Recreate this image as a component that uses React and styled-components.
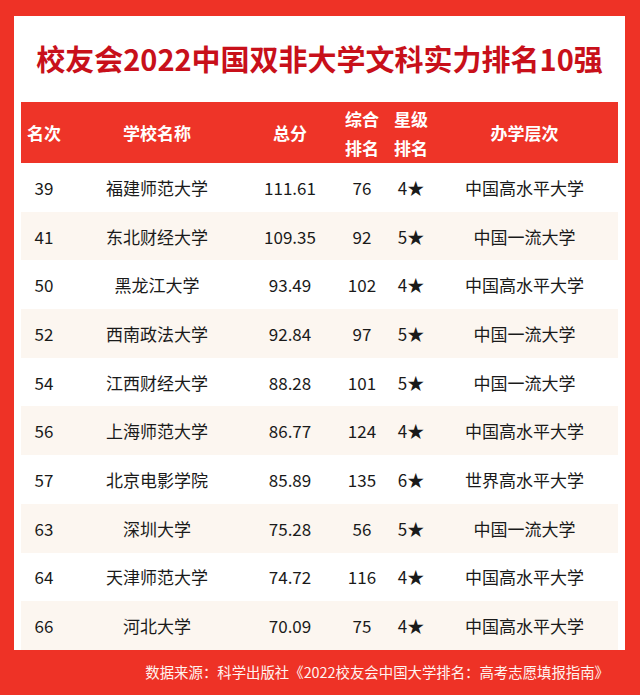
import React from 'react';
import styled, { createGlobalStyle } from 'styled-components';

const GlobalStyle = createGlobalStyle`
  body {
    margin: 0;
    background: #ee3226;
    font-family: "Noto Sans CJK SC", "Noto Sans", sans-serif;
  }
`;

const Frame = styled.div`
  width: 640px;
  height: 695px;
  box-sizing: border-box;
  background: #ee3226;
  padding: 16px 15px 0 14px;
  display: flex;
  flex-direction: column;
`;

const Panel = styled.div`
  background: #ffffff;
  height: 634px;
  box-sizing: border-box;
  padding: 0 7px;
  display: flex;
  flex-direction: column;
`;

const Title = styled.h1`
  margin: 0;
  height: 86px;
  display: flex;
  align-items: center;
  justify-content: center;
  padding-bottom: 2px;
  box-sizing: border-box;
  color: #c8101a;
  font-size: 29px;
  font-weight: 700;
  letter-spacing: 0;
`;

const Grid = styled.div`
  display: grid;
  grid-template-columns: 46px 180px 86px 58px 40px 1fr;
  align-items: center;
  height: ${(p) => p.$h};
  background: ${(p) => p.$bg};
`;

const HeadCell = styled.div`
  color: #ffffff;
  font-size: 17px;
  font-weight: 700;
  line-height: 29px;
  text-align: center;
  white-space: nowrap;
`;

const Cell = styled.div`
  color: #1a1a1a;
  font-size: 17px;
  text-align: center;
  white-space: nowrap;
`;

const Footer = styled.div`
  flex: 1;
  display: flex;
  align-items: center;
  justify-content: flex-end;
  padding-right: 16px;
  padding-bottom: 2px;
  color: #fff3f0;
  font-size: 14.4px;
`;

const rows = [
  ['39', '福建师范大学', '111.61', '76', '4★', '中国高水平大学'],
  ['41', '东北财经大学', '109.35', '92', '5★', '中国一流大学'],
  ['50', '黑龙江大学', '93.49', '102', '4★', '中国高水平大学'],
  ['52', '西南政法大学', '92.84', '97', '5★', '中国一流大学'],
  ['54', '江西财经大学', '88.28', '101', '5★', '中国一流大学'],
  ['56', '上海师范大学', '86.77', '124', '4★', '中国高水平大学'],
  ['57', '北京电影学院', '85.89', '135', '6★', '世界高水平大学'],
  ['63', '深圳大学', '75.28', '56', '5★', '中国一流大学'],
  ['64', '天津师范大学', '74.72', '116', '4★', '中国高水平大学'],
  ['66', '河北大学', '70.09', '75', '4★', '中国高水平大学'],
];

export default function App() {
  return (
    <Frame>
      <GlobalStyle />
      <Panel>
        <Title>校友会2022中国双非大学文科实力排名10强</Title>
        <Grid $h="61px" $bg="#ee3428">
          <HeadCell>名次</HeadCell>
          <HeadCell>学校名称</HeadCell>
          <HeadCell>总分</HeadCell>
          <HeadCell>综合<br />排名</HeadCell>
          <HeadCell>星级<br />排名</HeadCell>
          <HeadCell>办学层次</HeadCell>
        </Grid>
        {rows.map((r, i) => (
          <Grid key={r[0]} $h="48.7px" $bg={i % 2 ? '#fcf6f0' : '#ffffff'}>
            {r.map((c, j) => (
              <Cell key={j}>{c}</Cell>
            ))}
          </Grid>
        ))}
      </Panel>
      <Footer>数据来源：科学出版社《2022校友会中国大学排名：高考志愿填报指南》</Footer>
    </Frame>
  );
}
